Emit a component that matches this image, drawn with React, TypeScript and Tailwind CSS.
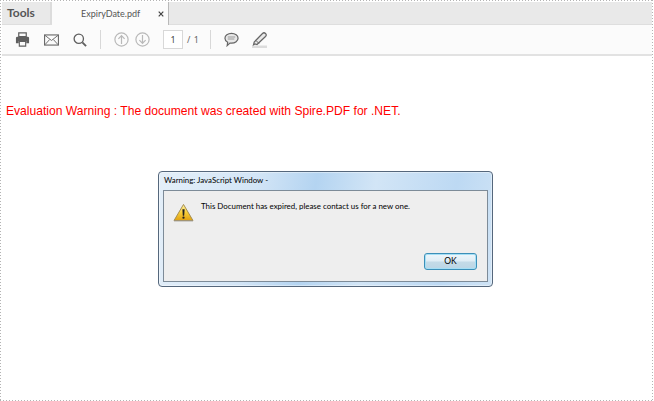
export default function App() {
  const sep = <div className="w-px h-[19px] bg-[#d8d8d8]" />;
  return (
    <div className="relative w-[654px] h-[401px] bg-white overflow-hidden font-['Noto_Sans',sans-serif]">
      <div className="absolute left-0 top-0 w-full h-px bg-[repeating-linear-gradient(90deg,#b4b4b4_0,#b4b4b4_1px,transparent_1px,transparent_3px)]" />
      <div className="absolute left-0 bottom-0 w-full h-px bg-[repeating-linear-gradient(90deg,#b4b4b4_0,#b4b4b4_1px,transparent_1px,transparent_3px)]" />
      <div className="absolute left-0 top-0 h-full w-px bg-[repeating-linear-gradient(180deg,#b4b4b4_0,#b4b4b4_1px,transparent_1px,transparent_3px)]" />
      <div className="absolute right-[1px] top-0 h-full w-px bg-[repeating-linear-gradient(180deg,#b4b4b4_0,#b4b4b4_1px,transparent_1px,transparent_3px)]" />

      <div className="flex flex-col pl-[2px] pr-[2px] pt-[2px]">
        <div className="flex h-[23px] bg-[#e9e9e9] border-b border-[#dedede]">
          <div className="w-[50px] pl-[5px] flex items-center text-[12px] font-bold text-[#555] border-r-2 border-[#dcdcdc] font-['Lato',sans-serif]">Tools</div>
          <div className="relative w-[117px] h-[23px] bg-[#fbfbfb] border-r border-[#b9b9b9] flex items-center pl-[29px] text-[9px] text-[#555] font-['Lato',sans-serif]">
            ExpiryDate.pdf
            <svg className="absolute left-[106px] top-[9px]" width="6" height="6" viewBox="0 0 6 6"><path d="M.7.7l4.6 4.6M5.3.7L.7 5.3" stroke="#444" strokeWidth="1.2" /></svg>
          </div>
        </div>
        <div className="flex items-center h-[29px] bg-[#fbfbfb] border-b-2 border-[#e2e2e2] box-content pl-[13px]">
          <svg width="15" height="15" viewBox="0 0 16 16" className="mr-[14px]"><path d="M4 1h8v4H4z" fill="none" stroke="#5f5f5f" strokeWidth="1.3"/><path d="M2.500 5h11A1.500 1.500 0 0 1 15 6.500V12h-3V9.500H4V12H1V6.500A1.500 1.500 0 0 1 2.500 5z" fill="#5f5f5f"/><path d="M4.600 10h6.800v5H4.600z" fill="none" stroke="#5f5f5f" strokeWidth="1.2"/></svg>
          <svg width="15" height="12" viewBox="0 0 16 12" className="mr-[14px]"><rect x=".6" y=".6" width="14.800" height="10.800" fill="none" stroke="#6a6a6a" strokeWidth="1.2"/><path d="M1 1l7 5.500L15 1M1 11l5-5.500M15 11l-5-5.500" fill="none" stroke="#6a6a6a"/></svg>
          <svg width="14" height="14" viewBox="0 0 15 15" className="mr-[13px]"><circle cx="6.200" cy="6.200" r="5" fill="none" stroke="#5f5f5f" strokeWidth="1.4"/><path d="M10 10l4 4" stroke="#5f5f5f" strokeWidth="2"/></svg>
          {sep}
          <svg width="15" height="15" viewBox="0 0 15 15" className="ml-[13px] mr-[6px]"><circle cx="7.500" cy="7.500" r="6.600" fill="none" stroke="#b9b9b9" strokeWidth="1.2"/><path d="M7.500 12V3.600M4.400 6.800l3.100-3.200 3.100 3.200" fill="none" stroke="#b9b9b9" strokeWidth="1.2"/></svg>
          <svg width="15" height="15" viewBox="0 0 15 15" className="mr-[13px]"><circle cx="7.500" cy="7.500" r="6.600" fill="none" stroke="#b9b9b9" strokeWidth="1.2"/><path d="M7.500 3v8.400M4.400 8.200l3.100 3.200 3.100-3.200" fill="none" stroke="#b9b9b9" strokeWidth="1.2"/></svg>
          <div className="w-[20px] h-[19px] border border-[#d8d8d8] bg-white flex items-center justify-center text-[9px] text-[#444]">1</div>
          <span className="ml-[4px] mr-[13px] w-[10px] text-[9px] text-[#666] tracking-[.5px] whitespace-nowrap">/ 1</span>
          {sep}
          <svg width="15" height="15" viewBox="0 0 16 15" className="ml-[13px] mr-[13px]"><path d="M8 1c3.900 0 7 2.300 7 5.200s-3.100 5.200-7 5.200c-.6 0-1.100 0-1.700-.1L3.400 14l.5-3.500C2 9.500 1 8 1 6.200 1 3.300 4.100 1 8 1z" fill="#e8e8e8" stroke="#666" strokeWidth="1.300"/><path d="M4 4.800h8M4 7h7" stroke="#999" strokeWidth="1.100"/></svg>
          <svg width="16" height="16" viewBox="0 0 16 16"><path d="M0 13.500h15V16H0z" fill="#dcdcdc"/><path d="M3 12l-1.500.8L2.200 10 10.500 1.500c1-1 2-1 3 0s1 2 0 3L5 12.500z" fill="#e8e8e8" stroke="#666" strokeWidth="1.200"/><path d="M4 8.500l3 3" stroke="#666"/></svg>
        </div>
      </div>

      <p className="ml-[6px] mt-[47px] h-[16px] leading-[16px] text-[12.1px] text-[#ff0000] whitespace-nowrap font-['Liberation_Sans',sans-serif]">
        Evaluation Warning : The document was created with Spire.PDF for .NET.
      </p>

      <div className="ml-[158px] mt-[52px] w-[335px] h-[116px] rounded-[4px] border border-[#55677c] bg-[linear-gradient(100deg,#e4eff9_0%,#d3e5f6_28%,#b4d4f1_45%,#d2e5f6_62%,#bdd9f3_85%,#cfe3f5_100%)] shadow-[inset_0_0_0_1px_rgba(255,255,255,0.4)] px-[4px] pb-[4px] flex flex-col font-['Lato',sans-serif]">
        <div className="h-[18px] pl-[1px] flex items-center text-[7.900px] text-black whitespace-nowrap">Warning: JavaScript Window -</div>
        <div className="flex-1 border border-[#7d8b98] bg-[#eeeeee] relative flex flex-col">
          <div className="flex pl-[9px] pt-[12px]">
            <svg width="21" height="19" viewBox="0 0 22 20">
              <defs>
                <linearGradient id="wg" x1="0" y1="0" x2="0" y2="1"><stop offset="0" stopColor="#fff2a8"/><stop offset=".5" stopColor="#f8cf3a"/><stop offset="1" stopColor="#e0a010"/></linearGradient>
              </defs>
              <path d="M11 1.500L21 18.500H1z" fill="url(#wg)" stroke="#a08a50" strokeWidth="1" strokeLinejoin="round"/>
              <path d="M1 18.500h20v.8H1z" fill="#9a9a9a"/>
              <path d="M9.800 6.500h2.400l-.5 7h-1.400z" fill="#222"/>
              <circle cx="11" cy="15.500" r="1.200" fill="#222"/>
            </svg>
            <span className="ml-[7px] -mt-[3px] h-[12px] leading-[12px] text-[7.900px] text-black whitespace-nowrap">This Document has expired, please contact us for a new one.</span>
          </div>
          <div className="mt-auto mb-[11px] mr-[10px] self-end w-[53px] h-[17px] rounded-[3px] border border-[#3c8fb8] bg-[linear-gradient(180deg,#eef6fb_0%,#dfedf5_48%,#c4dbe8_52%,#bcd6e5_100%)] shadow-[inset_0_0_0_1px_#a5dff5] flex items-center justify-center text-[8.500px] text-black">OK</div>
        </div>
      </div>
    </div>
  );
}
